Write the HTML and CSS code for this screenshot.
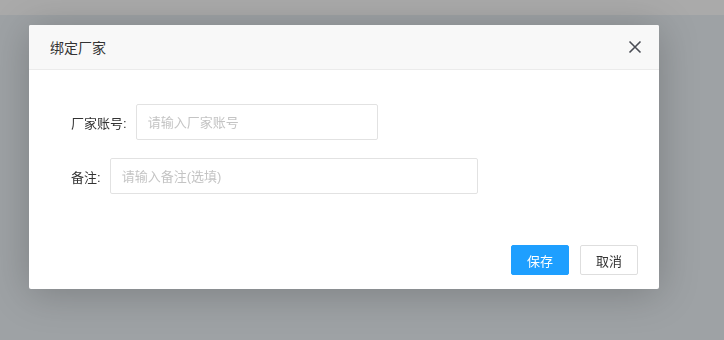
FILE: index.html
```html
<!DOCTYPE html>
<html lang="zh-CN">
<head>
    <meta charset="UTF-8">
    <title>绑定厂家</title>
    <link rel="stylesheet" href="styles.css">
</head>
<body>
    <div class="topbar"></div>
    <div class="page"></div>

    <div class="shade">
        <div class="layer">
            <div class="layer-title">
                <span>绑定厂家</span>
                <a class="layer-close" href="#" title="关闭">
                    <svg width="14" height="14" viewBox="0 0 14 14">
                        <path d="M1.5 1.5 L12.5 12.5 M12.5 1.5 L1.5 12.5" stroke="#4a4d55" stroke-width="1.6" fill="none"/>
                    </svg>
                </a>
            </div>
            <div class="layer-content">
                <div class="form-row">
                    <label>厂家账号:</label>
                    <input class="input input-account" type="text" placeholder="请输入厂家账号">
                </div>
                <div class="form-row">
                    <label>备注:</label>
                    <input class="input input-remark" type="text" placeholder="请输入备注(选填)">
                </div>
            </div>
            <div class="layer-btns">
                <button class="btn btn-primary">保存</button>
                <button class="btn">取消</button>
            </div>
        </div>
    </div>
</body>
</html>
```

FILE: styles.css
```css
html, body {
    margin: 0;
    padding: 0;
    height: 100%;
}
body {
    font-family: "Liberation Sans", "Noto Sans CJK SC", sans-serif;
    font-size: 14px;
    color: #333;
    background: #9ea2a5;
    overflow: hidden;
}
.topbar {
    height: 15px;
    background: #aaaaaa;
}
.shade {
    position: fixed;
    inset: 0;
    padding: 25px 0 0 29px;
}
.layer {
    width: 630px;
    height: 264px;
    background: #fff;
    border-radius: 2px;
    box-shadow: 0 4px 40px rgba(0, 0, 0, 0.22);
    display: flex;
    flex-direction: column;
}
.layer-title {
    height: 44px;
    padding: 0 17px 0 21px;
    background: #f8f8f8;
    border-bottom: 1px solid #ebebeb;
    border-radius: 2px 2px 0 0;
    display: flex;
    align-items: center;
    justify-content: space-between;
    font-size: 14px;
    color: #333;
}
.layer-close {
    display: flex;
    width: 14px;
    height: 14px;
}
.layer-content {
    flex: 1;
    padding: 34px 0 0 42px;
}
.form-row {
    display: flex;
    align-items: center;
    margin-bottom: 18px;
}
.form-row label {
    font-size: 13px;
    color: #333;
    margin-right: 9px;
}
.input {
    height: 36px;
    box-sizing: border-box;
    border: 1px solid #e2e2e2;
    border-radius: 2px;
    padding: 0 11px;
    font-family: inherit;
    font-size: 13px;
    color: #333;
    outline: none;
}
.input::placeholder {
    color: #c4c4c4;
}
.input-account { width: 242px; }
.input-remark { width: 368px; }
.layer-btns {
    display: flex;
    justify-content: flex-end;
    gap: 11px;
    padding: 0 21px 14px 0;
}
.btn {
    height: 30px;
    width: 58px;
    box-sizing: border-box;
    border: 1px solid #dedede;
    border-radius: 2px;
    background: #fff;
    color: #333;
    font-family: inherit;
    font-size: 13px;
    cursor: pointer;
}
.btn-primary {
    background: #1e9fff;
    border-color: #1e9fff;
    color: #fff;
}
```
